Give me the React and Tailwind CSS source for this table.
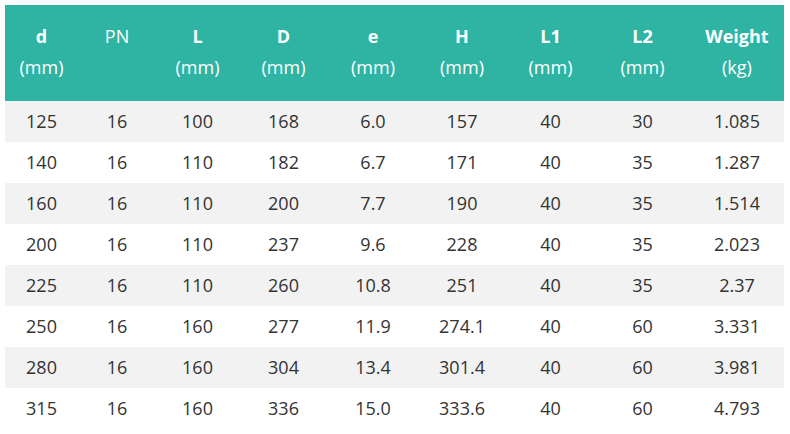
const COLS = [
  { label: 'd', unit: '(mm)', bold: true, w: 'w-[73px]' },
  { label: 'PN', unit: '', bold: false, w: 'w-[78px]' },
  { label: 'L', unit: '(mm)', bold: true, w: 'w-[83px]' },
  { label: 'D', unit: '(mm)', bold: true, w: 'w-[89px]' },
  { label: 'e', unit: '(mm)', bold: true, w: 'w-[90px]' },
  { label: 'H', unit: '(mm)', bold: true, w: 'w-[88px]' },
  { label: 'L1', unit: '(mm)', bold: true, w: 'w-[89px]' },
  { label: 'L2', unit: '(mm)', bold: true, w: 'w-[95px]' },
  { label: 'Weight', unit: '(kg)', bold: true, w: 'w-[94px]' },
];

const ROWS = [
  ['125', '16', '100', '168', '6.0', '157', '40', '30', '1.085'],
  ['140', '16', '110', '182', '6.7', '171', '40', '35', '1.287'],
  ['160', '16', '110', '200', '7.7', '190', '40', '35', '1.514'],
  ['200', '16', '110', '237', '9.6', '228', '40', '35', '2.023'],
  ['225', '16', '110', '260', '10.8', '251', '40', '35', '2.37'],
  ['250', '16', '160', '277', '11.9', '274.1', '40', '60', '3.331'],
  ['280', '16', '160', '304', '13.4', '301.4', '40', '60', '3.981'],
  ['315', '16', '160', '336', '15.0', '333.6', '40', '60', '4.793'],
];

export default function App() {
  return (
    <div className="w-[790px] h-[434px] bg-white p-[5px] font-['Open_Sans',sans-serif]">
      <table className="w-[779px] table-fixed border-collapse text-[18px]">
        <colgroup>
          {COLS.map((c) => <col key={c.label} className={c.w} />)}
        </colgroup>
        <thead>
          <tr className="bg-[#2fb4a4] text-white h-[96px]">
            {COLS.map((c) => (
              <th key={c.label} className="font-normal align-top pt-[16px] leading-[31px]">
                <div className={c.bold ? 'font-bold' : ''}>{c.label}</div>
                {c.unit && <div>{c.unit}</div>}
              </th>
            ))}
          </tr>
        </thead>
        <tbody>
          {ROWS.map((r, i) => (
            <tr key={i} className={i % 2 === 0 ? 'bg-[#f2f2f2] h-[41px]' : 'bg-white h-[41px]'}>
              {r.map((v, j) => (
                <td key={j} className="text-center text-[#333] p-0">{v}</td>
              ))}
            </tr>
          ))}
        </tbody>
      </table>
    </div>
  );
}
